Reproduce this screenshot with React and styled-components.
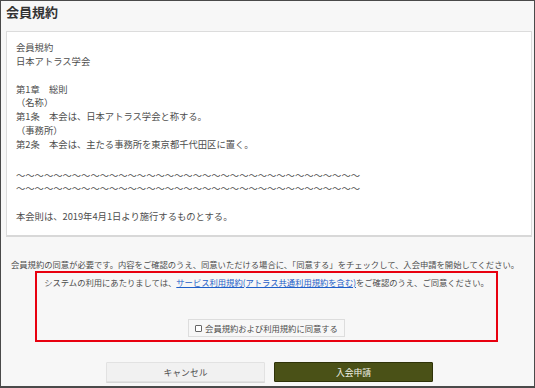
import React from "react";
import styled, { createGlobalStyle } from "styled-components";

const Global = createGlobalStyle`
  html, body { margin: 0; padding: 0; background: #f7f7f7; }
  body { font-family: "Noto Sans CJK JP", "Noto Sans", sans-serif; color: #4d4d4d; }
  * { box-sizing: border-box; }
`;

const Frame = styled.div`
  width: 535px;
  height: 388px;
  border: 1px solid #4a4a4a;
  border-bottom-width: 2px;
  background: #f7f7f7;
  display: flex;
  flex-direction: column;
  overflow: hidden;
`;

const Header = styled.div`
  height: 30px;
  padding: 3px 5px 0;
`;

const Title = styled.h1`
  margin: 0;
  font-size: 13px;
  line-height: 16px;
  font-weight: 700;
  color: #333;
`;

const TermsBox = styled.div`
  margin: 0 2px 0 5px;
  height: 206px;
  background: #fff;
  border: 1px solid #dcdcdc;
  border-bottom: 2px solid #d8d8d8;
  padding: 9px 9px 0;
  font-size: 9.3px;
  line-height: 13.8px;
  color: #4d4d4d;
  overflow: hidden;
`;

const Para = styled.p`
  margin: 0 0 ${(p) => p.$gap || 0}px;
  white-space: pre;
`;

const Notice = styled.p`
  margin: 21px 0 0;
  padding-left: 10px;
  font-size: 8.3px;
  line-height: 12px;
  color: #4d4d4d;
  white-space: nowrap;
`;

const AgreeBox = styled.div`
  margin: 1px 0 0 34px;
  width: 463px;
  height: 71px;
  border: 2px solid #e8000f;
  padding: 3px 0 0;
  display: flex;
  flex-direction: column;
  align-items: center;
`;

const AgreeText = styled.p`
  margin: 0;
  font-size: 8.3px;
  line-height: 12px;
  color: #4d4d4d;
  white-space: nowrap;
`;

const Link = styled.a`
  color: #1f5fc8;
  text-decoration: underline;
`;

const CheckLabel = styled.label`
  margin-top: 31px;
  width: 157px;
  height: 18px;
  display: flex;
  align-items: center;
  justify-content: center;
  gap: 3px;
  background: #f7f7f7;
  border: 1px solid #dddddd;
  font-size: 8.3px;
  color: #4d4d4d;
`;

const Box = styled.span`
  width: 7px;
  height: 7px;
  border: 1px solid #666;
  background: #fff;
  border-radius: 1px;
`;

const Actions = styled.div`
  margin-top: 20px;
  display: flex;
  justify-content: center;
  gap: 9px;
  padding-left: 4px;
`;

const Button = styled.button`
  width: 159px;
  height: 20px;
  font-family: inherit;
  font-size: 8.8px;
  border-radius: 1px;
  cursor: pointer;
  background: ${(p) => (p.$primary ? "#4a5117" : "#f1f1f1")};
  color: ${(p) => (p.$primary ? "#f2f2e8" : "#4d4d4d")};
  border: 1px solid ${(p) => (p.$primary ? "#2f3309" : "#e2e2e2")};
  box-shadow: ${(p) => (p.$primary ? "none" : "0 1px 0 #d6d6d6")};
`;

const tilde = "～".repeat(37);

export default function App() {
  return (
    <>
      <Global />
      <Frame>
        <Header>
          <Title>会員規約</Title>
        </Header>
        <TermsBox>
          <Para $gap={14}>{"会員規約\n日本アトラス学会"}</Para>
          <Para $gap={17}>
            {"第1章　総則\n（名称）\n第1条　本会は、日本アトラス学会と称する。\n（事務所）\n第2条　本会は、主たる事務所を東京都千代田区に置く。"}
          </Para>
          <Para $gap={14}>{tilde + "\n" + tilde}</Para>
          <Para>本会則は、2019年4月1日より施行するものとする。</Para>
        </TermsBox>
        <Notice>
          会員規約の同意が必要です。内容をご確認のうえ、同意いただける場合に、「同意する」をチェックして、入会申請を開始してください。
        </Notice>
        <AgreeBox>
          <AgreeText>
            システムの利用にあたりましては、
            <Link href="#">サービス利用規約(アトラス共通利用規約を含む)</Link>
            をご確認のうえ、ご同意ください。
          </AgreeText>
          <CheckLabel>
            <Box />
            会員規約および利用規約に同意する
          </CheckLabel>
        </AgreeBox>
        <Actions>
          <Button>キャンセル</Button>
          <Button $primary>入会申請</Button>
        </Actions>
      </Frame>
    </>
  );
}
